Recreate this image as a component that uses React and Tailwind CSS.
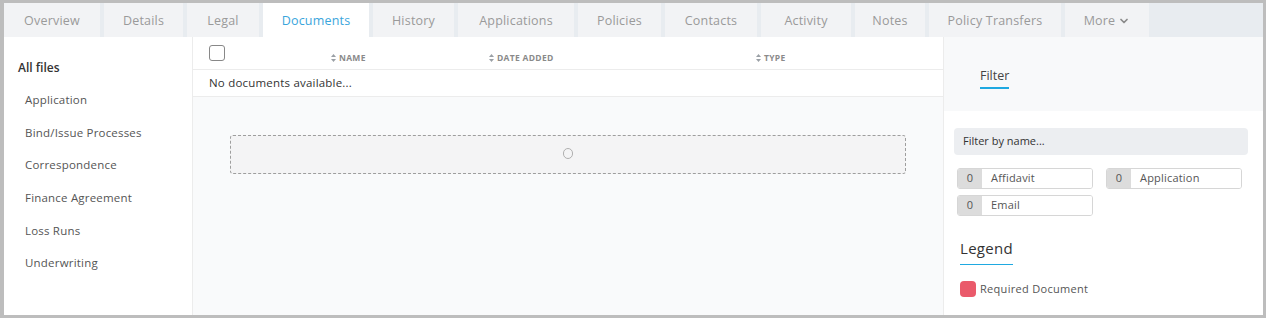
import { ChevronDown } from 'lucide-react';

const tabs = [
  { label: 'Overview', w: 'w-[96px]' },
  { label: 'Details', w: 'w-[79px]' },
  { label: 'Legal', w: 'w-[72px]' },
  { label: 'Documents', w: 'w-[106px]', active: true },
  { label: 'History', w: 'w-[81px]' },
  { label: 'Applications', w: 'w-[116px]' },
  { label: 'Policies', w: 'w-[83px]' },
  { label: 'Contacts', w: 'w-[92px]' },
  { label: 'Activity', w: 'w-[90px]' },
  { label: 'Notes', w: 'w-[70px]' },
  { label: 'Policy Transfers', w: 'w-[132px]' },
];

const folders = [
  'Application',
  'Bind/Issue Processes',
  'Correspondence',
  'Finance Agreement',
  'Loss Runs',
  'Underwriting',
];

function SortIcon() {
  return (
    <svg width="5" height="8" viewBox="0 0 5 8" className="mr-[3px]">
      <path d="M2.5 0 L5 3 L0 3 Z" fill="#9aa0a6" />
      <path d="M2.5 8 L5 5 L0 5 Z" fill="#9aa0a6" />
    </svg>
  );
}

function Chip({ label, w = 'w-[136px]' }) {
  return (
    <div className={`flex h-[21px] ${w} rounded-[3px] border border-[#d6d6d6] overflow-hidden text-[11px] text-[#555] tracking-[0.2px]`}>
      <div className="w-[24px] bg-[#dcdcdc] flex items-center justify-center">0</div>
      <div className="flex-1 bg-white flex items-center pl-[9px]">{label}</div>
    </div>
  );
}

export default function App() {
  return (
    <div
      className="w-[1266px] h-[318px] bg-[#bdbdbd] pt-[3px] pl-[4px] pr-[3px] pb-[3px]"
      style={{ fontFamily: '"Open Sans", "Liberation Sans", sans-serif' }}
    >
      <div className="flex flex-col h-full bg-white">
        {/* tab bar */}
        <div className="flex h-[34px] bg-[#e8ecf0] gap-[4px]">
          {tabs.map((t) => (
            <div
              key={t.label}
              className={`${t.w} flex items-center justify-center pt-[2px] text-[12.5px] tracking-[0.2px] ${
                t.active ? 'bg-white text-[#3aa5dc]' : 'bg-[#f2f3f5] text-[#9a9a9a]'
              }`}
            >
              {t.label}
            </div>
          ))}
          <div className="w-[84px] flex items-center justify-center pt-[2px] gap-[3px] bg-[#f2f3f5] text-[12.5px] tracking-[0.2px] text-[#9a9a9a]">
            More
            <ChevronDown size={12} strokeWidth={3.5} className="text-[#8a8a8a]" />
          </div>
        </div>

        <div className="flex flex-1 min-h-0">
          {/* left sidebar */}
          <div className="w-[189px] border-r border-[#ececec] pt-[22px]">
            <div className="pl-[14px] text-[12px] font-semibold text-[#333] h-[18px] leading-[18px]">All files</div>
            <div className="flex flex-col pl-[21px] mt-[14px] gap-[14.7px]">
              {folders.map((f) => (
                <div key={f} className="text-[11.5px] text-[#555] tracking-[0.2px] h-[18px] leading-[18px]">
                  {f}
                </div>
              ))}
            </div>
          </div>

          {/* middle */}
          <div className="w-[751px] bg-[#f9fafb] border-r border-[#ececec] flex flex-col">
            <div className="h-[33px] bg-white border-b border-[#ececec] flex items-center pl-[16px] relative">
              <div className="w-[16px] h-[16px] rounded-[3px] border border-[#888] bg-white" />
              <div className="absolute left-[138px] top-[15px] flex items-center text-[8.5px] font-bold text-[#8a8a8a] tracking-[0.3px]">
                <SortIcon />NAME
              </div>
              <div className="absolute left-[296px] top-[15px] flex items-center text-[8.5px] font-bold text-[#8a8a8a] tracking-[0.3px]">
                <SortIcon />DATE ADDED
              </div>
              <div className="absolute left-[563px] top-[15px] flex items-center text-[8.5px] font-bold text-[#8a8a8a] tracking-[0.3px]">
                <SortIcon />TYPE
              </div>
            </div>
            <div className="h-[27px] bg-white border-b border-[#ececec] flex items-center pl-[16px] text-[11.5px] text-[#333] tracking-[0.2px]">
              No documents available...
            </div>
            <div className="pt-[38px] pl-[37px]">
              <div className="w-[676px] h-[39px] rounded-[3px] border border-dashed border-[#9e9e9e] bg-[#f4f4f5] flex items-center justify-center">
                <div className="w-[10px] h-[11px] rounded-full border border-[#b0b0b0] -mt-[2px]" />
              </div>
            </div>
          </div>

          {/* right panel */}
          <div className="flex-1 flex flex-col">
            <div className="h-[74px] bg-[#f8f9fa] pl-[36px] pt-[25px]">
              <div className="inline-block text-[12.5px] text-[#444] leading-[16px] pb-[3px] border-b-2 border-[#1fa9e1]">
                Filter
              </div>
            </div>
            <div className="flex-1 bg-white pl-[10px] pr-[15px] pt-[17px]">
              <div className="h-[27px] rounded-[4px] bg-[#eceef1] flex items-center pl-[9px] text-[11px] text-[#333]">
                Filter by name...
              </div>
              <div className="mt-[13px] pl-[3px] grid grid-cols-[136px_136px] gap-x-[13px] gap-y-[6px]">
                <Chip label="Affidavit" />
                <Chip label="Application" />
                <Chip label="Email" />
              </div>
              <div className="mt-[20px] pl-[6px]">
                <div className="inline-block text-[15px] text-[#333] leading-[20px] pb-[6px] border-b border-[#1fa9e1] tracking-[0.3px]">
                  Legend
                </div>
                <div className="flex items-center mt-[16px] gap-[4px]">
                  <div className="w-[16px] h-[16px] rounded-[4px] bg-[#ea5a6b]" />
                  <div className="text-[11px] text-[#555] tracking-[0.3px]">Required Document</div>
                </div>
              </div>
            </div>
          </div>
        </div>
      </div>
    </div>
  );
}
